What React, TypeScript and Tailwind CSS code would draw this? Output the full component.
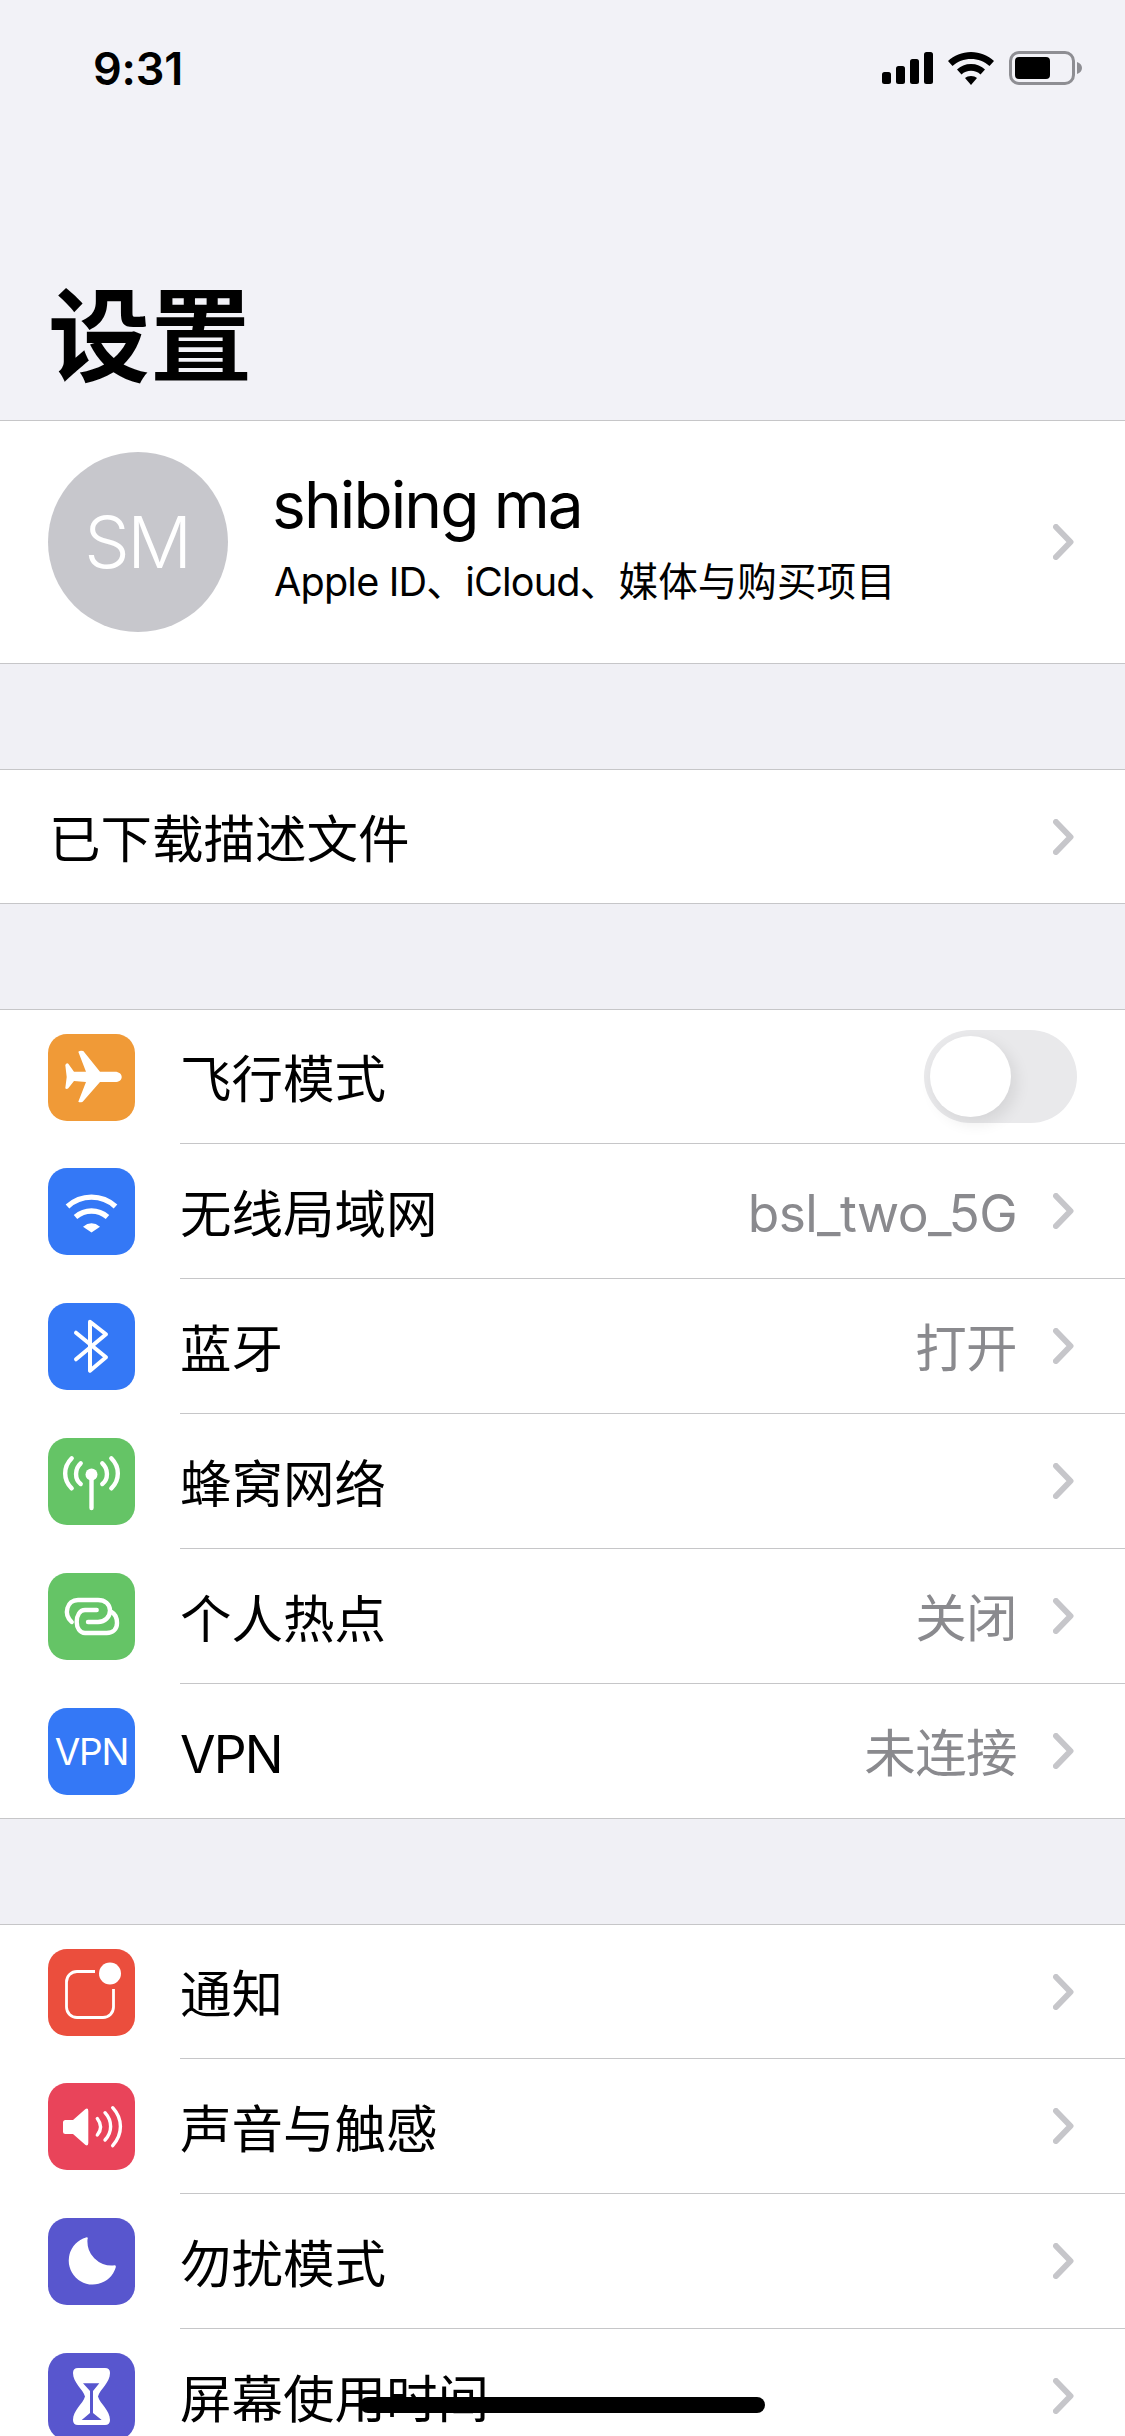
import React from "react";

const FONT = 'font-["Inter","Noto_Sans_CJK_SC",sans-serif]';

function Chevron() {
  return (
    <svg width="21" height="36" viewBox="0 0 21 36" className="shrink-0 ml-[36px] mr-[51px]">
      <polyline points="3,3 17.5,18 3,33" fill="none" stroke="#c6c6ca" strokeWidth="6" strokeLinecap="round" strokeLinejoin="round" />
    </svg>
  );
}

function IconBox({ color, children }: { color: string; children: React.ReactNode }) {
  return (
    <div className={`w-[87px] h-[87px] rounded-[19px] shrink-0 ml-[48px] mr-[45px] flex items-center justify-center ${color}`}>
      {children}
    </div>
  );
}

function Glyph({ children }: { children: React.ReactNode }) {
  return (
    <svg width="87" height="87" viewBox="0 0 87 87" fill="none">
      {children}
    </svg>
  );
}

function Row({
  icon,
  color,
  label,
  value,
  toggle,
  first,
  last,
}: {
  icon: React.ReactNode;
  color: string;
  label: React.ReactNode;
  value?: string;
  toggle?: boolean;
  first?: boolean;
  last?: boolean;
}) {
  const height = first || last ? "h-[134px]" : "h-[135px]";
  const line = last ? "" : "border-b border-[#c6c6c8]";
  return (
    <div className={`flex items-center ${height}`}>
      <IconBox color={color}>{icon}</IconBox>
      <div className={`flex-1 min-w-0 h-full flex items-center ${line}`}>
        <span className="flex-1 text-[51.5px] leading-[60px] pt-[5px] text-black">{label}</span>
        {value ? <span className="text-[51.5px] leading-[60px] pt-[3px] text-[#8a8a8e] tracking-[-0.6px]">{value}</span> : null}
        {toggle ? (
          <div className="w-[153px] h-[93px] rounded-full bg-[#e9e9eb] mr-[48px] p-[6px]">
            <div className="w-[81px] h-[81px] rounded-full bg-white shadow-[5px_6px_16px_rgba(0,0,0,0.09)]" />
          </div>
        ) : (
          <Chevron />
        )}
      </div>
    </div>
  );
}

const Plane = (
  <Glyph>
    <path
      d="M30.3 17.7 Q32 16.2 35.3 17 L52 37.7 H67 C71 37.7 73.7 40 73.7 43 C73.7 46 71 48 67 48 H52 L34.7 67.7 Q32 69 30.3 67.7 L38 48 L26 47 L20.3 54.3 Q18.5 55.5 17.3 54.3 L18.7 43 L17.3 31 Q18.5 28.5 20.3 29.7 L26 37.7 L38 37.7 Z"
      fill="#fff"
    />
  </Glyph>
);

const Wifi = (
  <Glyph>
    <path d="M19.5 38.5 C33 26 54 26 67.5 38.5" stroke="#fff" strokeWidth="5.4" />
    <path d="M27.5 49 C37 41 50 41 59.5 49" stroke="#fff" strokeWidth="5.4" />
    <path d="M35 58.7 Q43.5 52 52 58.7 L43.5 64.5 Z" fill="#fff" />
  </Glyph>
);

const Bluetooth = (
  <Glyph>
    <path
      d="M28 29.7 L58 54.3 L42 67.7 V18.7 L58 31.3 L28 56.3"
      stroke="#fff"
      strokeWidth="4"
      strokeLinecap="round"
      strokeLinejoin="round"
    />
  </Glyph>
);

const Cell = (
  <Glyph>
    <circle cx="43.5" cy="36.5" r="6" fill="#fff" />
    <path d="M43.5 37 V70" stroke="#fff" strokeWidth="4.4" strokeLinecap="round" />
    <g stroke="#fff" strokeWidth="4.4" strokeLinecap="round">
      <path d="M32.7 25.3 C26.5 31 26.5 41 32.7 46" />
      <path d="M23.7 20.3 C15 29 15 42 23.7 50.3" />
      <path d="M54.3 25.3 C60.5 31 60.5 41 54.3 46" />
      <path d="M63.3 20.3 C72 29 72 42 63.3 50.3" />
    </g>
  </Glyph>
);

const Hotspot = (
  <Glyph>
    <g stroke="#fff" strokeWidth="4.4" strokeLinecap="round">
      <path d="M23.7 49 C15 41 19 27 30 27 H50 C57 27 62 31 62 37.5 C62 44 57 49 50 49 H40" />
      <path d="M63.5 39 C69 42 69 47 69 50 C69 56 65 60 58.7 60 H37 C32 60 28.7 55 28.7 49 C28.7 42 32 37 37 37 H48.7" />
    </g>
  </Glyph>
);

const Vpn = <span className="text-[37px] leading-none text-white tracking-[-1.2px] font-normal">VPN</span>;

const Bell = (
  <Glyph>
    <path
      d="M47 22.5 H29 A10.5 10.5 0 0 0 18.5 33 V58 A10.5 10.5 0 0 0 29 68.5 H55 A10.5 10.5 0 0 0 65.5 58 V40"
      stroke="#fff"
      strokeWidth="2.8"
    />
    <circle cx="62" cy="24.5" r="11" fill="#fff" />
  </Glyph>
);

const Sound = (
  <Glyph>
    <path
      d="M17.5 37 H25 L37.5 26 Q40.3 24.5 40.3 28 V60 Q40.3 63.5 37.5 62 L25 51 H17.5 Q15 51 15 48.5 V39.5 Q15 37 17.5 37 Z"
      fill="#fff"
    />
    <g stroke="#fff" strokeWidth="3.4" strokeLinecap="round">
      <path d="M49.3 35.5 C53.5 41 53.5 47 49.3 52" />
      <path d="M57 29.7 C64.5 38 64.5 49 57 57" />
      <path d="M64.7 24.7 C75 36 75 51 64.7 62.7" />
    </g>
  </Glyph>
);

const Moon = (
  <Glyph>
    <path d="M38 19.5 A24 24 0 1 0 67.7 49.5 Q68.5 46.5 65 47.5 A24 24 0 0 1 39.5 21.5 Q40.5 18.8 38 19.5 Z" fill="#fff" />
  </Glyph>
);

const Hourglass = (
  <Glyph>
    <path
      d="M30 15 H57 Q62 15 62 20 C62 30 52 36 50 43.5 C52 51 62 57 62 67 Q62 72 57 72 H30 Q25 72 25 67 C25 57 35 51 37 43.5 C35 36 25 30 25 20 Q25 15 30 15 Z"
      fill="#fff"
    />
    <path d="M35 30.3 H51.3 L45 38 V60 L53.7 67 H33.7 L42 60 V38 Z" fill="#5856ce" />
  </Glyph>
);

export default function App() {
  return (
    <div className={`relative w-[1125px] h-[2436px] overflow-hidden bg-[#f0f0f5] ${FONT}`}>
      <header className="h-[420px] bg-[#f2f2f7] flex flex-col justify-between">
        <div className="flex items-center justify-between h-[34px] mt-[51px] pl-[93px] pr-[43px]">
          <span className="text-[45px] leading-none font-semibold text-black tracking-[-0.2px]">9:31</span>
          <div className="flex items-center">
            <svg width="51" height="32" viewBox="0 0 51 32" fill="#000" className="mr-[15px]">
              <rect x="0" y="20" width="9" height="12" rx="2.5" />
              <rect x="14" y="14" width="9" height="18" rx="2.5" />
              <rect x="28" y="7" width="9" height="25" rx="2.5" />
              <rect x="42" y="0" width="9" height="32" rx="2.5" />
            </svg>
            <svg width="46" height="33" viewBox="0 0 46 33" fill="#000" className="mr-[15px]">
              <path d="M23 0 C32 0 40 3.5 46 9 L41.5 14 C36.5 9.5 30 7 23 7 C16 7 9.5 9.5 4.5 14 L0 9 C6 3.5 14 0 23 0 Z" />
              <path d="M23 12 C28.5 12 33.5 14 37 17.5 L32.5 22.5 C30 20 26.5 18.8 23 18.8 C19.5 18.8 16 20 13.5 22.5 L9 17.5 C12.5 14 17.5 12 23 12 Z" />
              <path d="M23 24 C25.5 24 27.5 24.8 29 26 L23 33 L17 26 C18.5 24.8 20.5 24 23 24 Z" />
            </svg>
            <div className="flex items-center">
              <div className="w-[66px] h-[34px] rounded-[10px] border-[3px] border-[#8e8e93] p-[3px]">
                <div className="w-[35px] h-[22px] rounded-[4px] bg-black" />
              </div>
              <svg width="5" height="12" viewBox="0 0 5 12" fill="#8e8e93" className="ml-[2px]">
                <path d="M0 0 C3 1 5 3 5 6 C5 9 3 11 0 12 Z" />
              </svg>
            </div>
          </div>
        </div>
        <h1 className="text-[102px] leading-[120px] font-bold text-black pl-[48px] pb-[23px]">设置</h1>
      </header>

      <section className="h-[244px] bg-white border-y border-[#c6c6c8] flex items-center">
        <div className="w-[180px] h-[180px] rounded-full bg-[#c7c7cc] ml-[48px] mr-[46px] shrink-0 flex items-center justify-center">
          <span className="text-[72px] leading-none font-light text-white tracking-[-2.5px] -ml-[2px]">SM</span>
        </div>
        <div className="flex-1 flex flex-col -mt-[9px]">
          <span className="text-[64px] leading-[72px] text-black tracking-[-1.9px] -ml-[2px]">shibing ma</span>
          <span className="text-[39.6px] leading-[48px] mt-[17px] text-black">
            <span className="tracking-[-0.8px]">Apple ID、iCloud、</span>媒体与购买项目
          </span>
        </div>
        <Chevron />
      </section>

      <section className="h-[135px] mt-[105px] bg-white border-y border-[#c6c6c8] flex items-center">
        <span className="flex-1 pl-[49px] pt-[5px] text-[51.5px] leading-[60px] text-black">已下载描述文件</span>
        <Chevron />
      </section>

      <section className="mt-[105px] bg-white border-y border-[#c6c6c8]">
        <Row first color="bg-[#f09a37]" icon={Plane} label="飞行模式" toggle />
        <Row color="bg-[#3478f6]" icon={Wifi} label="无线局域网" value="bsl_two_5G" />
        <Row color="bg-[#3478f6]" icon={Bluetooth} label="蓝牙" value="打开" />
        <Row color="bg-[#65c466]" icon={Cell} label="蜂窝网络" />
        <Row color="bg-[#65c466]" icon={Hotspot} label="个人热点" value="关闭" />
        <Row last color="bg-[#3478f6]" icon={Vpn} label={<span className="tracking-[-1.8px]">VPN</span>} value="未连接" />
      </section>

      <section className="mt-[105px] bg-white border-t border-[#c6c6c8]">
        <Row first color="bg-[#eb4e3d]" icon={Bell} label="通知" />
        <Row color="bg-[#e9445a]" icon={Sound} label="声音与触感" />
        <Row color="bg-[#5856ce]" icon={Moon} label="勿扰模式" />
        <Row color="bg-[#5856ce]" icon={Hourglass} label="屏幕使用时间" />
      </section>

      <div className="absolute left-[360px] top-[2397px] w-[405px] h-[16px] rounded-full bg-black" />
    </div>
  );
}
